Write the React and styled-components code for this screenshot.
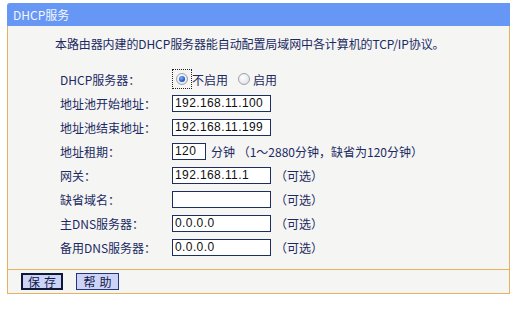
import React from "react";
import styled, { createGlobalStyle } from "styled-components";

const Global = createGlobalStyle`
  html, body { margin: 0; padding: 0; background: #ffffff; }
  body { font-family: "Noto Sans CJK SC", "Liberation Sans", sans-serif; font-size: 12px; }
`;

const Panel = styled.div`
  margin: 3px 0 0 7px;
  width: 503px;
`;

const Header = styled.div`
  height: 23px;
  background: #6797f4;
  border-top-left-radius: 3px;
  color: #f4f6ff;
  font-size: 12px;
  line-height: 23px;
  padding-left: 6px;
  box-sizing: border-box;
`;

const Body = styled.div`
  background: #f5f5f4;
  border-left: 1px solid #e6b25e;
  border-right: 1px solid #e6b25e;
  padding: 0 0 10px 0;
`;

const Desc = styled.div`
  height: 41px;
  line-height: 18px;
  padding: 9px 0 0 47px;
  box-sizing: border-box;
  color: #1b2a62;
  font-size: 12px;
  letter-spacing: -0.1px;
`;

const Form = styled.div`
  display: grid;
  grid-template-columns: 112px 1fr;
  grid-auto-rows: 24px;
  padding-left: 52px;
`;

const Label = styled.div`
  display: flex;
  align-items: center;
  color: #1b2a62;
  font-size: 12px;
  white-space: nowrap;
`;

const Field = styled.div`
  display: flex;
  align-items: center;
  color: #1b2a62;
  font-size: 12px;
  white-space: nowrap;
`;

const Input = styled.div`
  width: ${(p) => p.$w}px;
  height: 17px;
  box-sizing: border-box;
  border: 1px solid #1d2f5f;
  background: #ffffff;
  font-family: "Liberation Sans", sans-serif;
  font-size: 12px;
  letter-spacing: 0.4px;
  line-height: 15px;
  padding-left: 2px;
  color: #101010;
  margin-right: ${(p) => p.$mr || 0}px;
`;

const Note = styled.span`
  color: #1b2a62;
`;

const RadioFocus = styled.span`
  display: inline-flex;
  align-items: center;
  justify-content: center;
  width: 20px;
  height: 20px;
  box-sizing: border-box;
  border: 1px dotted #222;
`;

const Radio = styled.span`
  display: inline-block;
  width: 12px;
  height: 12px;
  border-radius: 50%;
  box-sizing: border-box;
  border: 1px solid #9aa3b0;
  background: radial-gradient(circle at 40% 35%, #ffffff 0%, #e4e6ea 70%, #cfd3d9 100%);
  position: relative;
  &::after {
    content: "";
    display: ${(p) => (p.$on ? "block" : "none")};
    position: absolute;
    left: 2px;
    top: 2px;
    width: 6px;
    height: 6px;
    border-radius: 50%;
    background: radial-gradient(circle at 40% 35%, #7fb4ff 0%, #2459c8 60%, #15388a 100%);
  }
`;

const RadioText = styled.span`
  margin-left: ${(p) => p.$ml || 0}px;
  margin-right: ${(p) => p.$mr || 0}px;
`;

const Footer = styled.div`
  height: 25px;
  box-sizing: border-box;
  background: #f5f5f4;
  border: 1px solid #e6b25e;
  display: flex;
  align-items: center;
  gap: 13px;
  padding-left: 13px;
`;

const Button = styled.button`
  height: 17px;
  width: ${(p) => (p.$main ? 42 : 43)}px;
  box-sizing: border-box;
  border: ${(p) => (p.$main ? "2px solid #10183a" : "1px solid #24357a")};
  background: #cdd3f6;
  color: #101a48;
  font-family: "Noto Sans CJK SC", sans-serif;
  font-size: 12px;
  line-height: 13px;
  padding: 0;
  letter-spacing: 4px;
  text-indent: 4px;
`;

const rows = [
  { label: "地址池开始地址：", value: "192.168.11.100", w: 99 },
  { label: "地址池结束地址：", value: "192.168.11.199", w: 99 },
];

const rows2 = [
  { label: "网关：", value: "192.168.11.1" },
  { label: "缺省域名：", value: "" },
  { label: "主DNS服务器：", value: "0.0.0.0" },
  { label: "备用DNS服务器：", value: "0.0.0.0" },
];

export default function App() {
  return (
    <>
      <Global />
      <Panel>
        <Header>DHCP服务</Header>
        <Body>
          <Desc>本路由器内建的DHCP服务器能自动配置局域网中各计算机的TCP/IP协议。</Desc>
          <Form>
            <Label>DHCP服务器：</Label>
            <Field>
              <RadioFocus>
                <Radio $on />
              </RadioFocus>
              <RadioText $mr={10}>不启用</RadioText>
              <Radio />
              <RadioText $ml={3}>启用</RadioText>
            </Field>
            {rows.map((r) => (
              <React.Fragment key={r.label}>
                <Label>{r.label}</Label>
                <Field>
                  <Input $w={r.w}>{r.value}</Input>
                </Field>
              </React.Fragment>
            ))}
            <Label>地址租期：</Label>
            <Field>
              <Input $w={34} $mr={5}>120</Input>
              <Note>分钟 （1～2880分钟，缺省为120分钟）</Note>
            </Field>
            {rows2.map((r) => (
              <React.Fragment key={r.label}>
                <Label>{r.label}</Label>
                <Field>
                  <Input $w={99} $mr={4}>{r.value}</Input>
                  <Note>（可选）</Note>
                </Field>
              </React.Fragment>
            ))}
          </Form>
        </Body>
        <Footer>
          <Button $main>保存</Button>
          <Button>帮助</Button>
        </Footer>
      </Panel>
    </>
  );
}
